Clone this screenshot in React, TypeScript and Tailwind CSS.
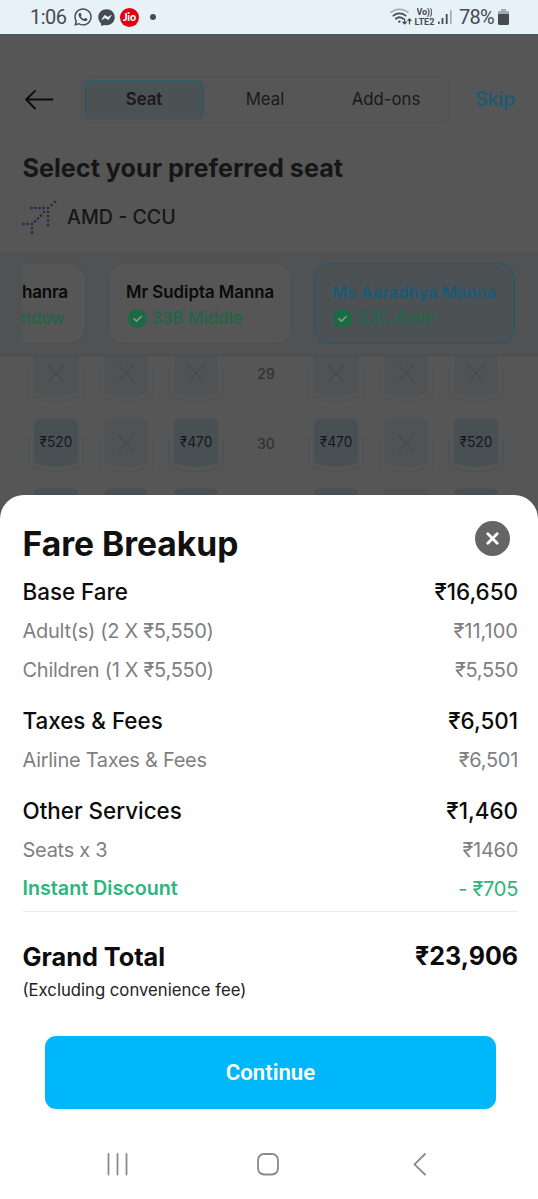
import { FaWhatsapp, FaFacebookMessenger } from "react-icons/fa";

type FareLine = {
  label: string;
  value: string;
  rowClass: string;
  labelClass: string;
  valueClass: string;
};

const HEAD = "pt-px text-[22.4px] font-medium text-[#0c0c0c]";
const SUB = "text-[20px] tracking-[-0.28px] text-[#7f7f7f]";
const SUB_VALUE = "text-[20px] tracking-[-0.3px] text-[#7f7f7f]";

const fareLines: FareLine[] = [
  { label: "Base Fare", value: "₹16,650", rowClass: "h-10", labelClass: HEAD, valueClass: HEAD },
  {
    label: "Adult(s) (2 X ₹5,550)",
    value: "₹11,100",
    rowClass: "h-[39px]",
    labelClass: SUB,
    valueClass: "text-[20px] text-[#7f7f7f]",
  },
  { label: "Children (1 X ₹5,550)", value: "₹5,550", rowClass: "h-10", labelClass: SUB, valueClass: SUB_VALUE },
  { label: "Taxes & Fees", value: "₹6,501", rowClass: "mt-2.5 h-10", labelClass: HEAD, valueClass: HEAD },
  { label: "Airline Taxes & Fees", value: "₹6,501", rowClass: "h-[39px]", labelClass: SUB, valueClass: SUB_VALUE },
  { label: "Other Services", value: "₹1,460", rowClass: "mt-[11px] h-10", labelClass: HEAD, valueClass: HEAD },
  { label: "Seats x 3", value: "₹1460", rowClass: "h-[39px]", labelClass: SUB, valueClass: SUB_VALUE },
  {
    label: "Instant Discount",
    value: "- ₹705",
    rowClass: "h-[39px]",
    labelClass: "text-[19.7px] font-semibold text-[#2cb67d]",
    valueClass: "text-[20px] tracking-[-0.3px] text-[#2cb67d]",
  },
];

// null is a blocked seat
const seatRows: { row: string; left: (string | null)[]; right: (string | null)[] }[] = [
  { row: "29", left: [null, null, null], right: [null, null, null] },
  { row: "30", left: ["₹520", null, "₹470"], right: ["₹470", null, "₹520"] },
  { row: "", left: ["", "", ""], right: ["", null, ""] },
];

function StatusBar() {
  return (
    <div className="flex h-[34px] shrink-0 items-center bg-[#e6f1f8] pl-[30px] pr-[29px] font-[Roboto] text-[#474b50]">
      <span className="w-[43px] text-[20px] leading-none tracking-[-0.5px]">1:06</span>
      <FaWhatsapp className="h-[20px] w-[20px]" />
      <FaFacebookMessenger className="ml-[5px] h-[17px] w-[17px]" />
      <span className="ml-[5px] flex h-[19px] w-[19px] items-center justify-center rounded-full bg-[#e3000f] font-[Lato] text-[10.5px] font-black leading-none text-white">
        Jio
      </span>
      <span className="ml-[11px] h-[6px] w-[6px] rounded-full bg-[#474b50]" />

      <div className="ml-auto flex items-center">
        <svg width="22" height="18" viewBox="0 0 22 18" fill="none" strokeLinecap="round">
          <path d="M1 4.4C6 .2 13 .2 18 4.4" stroke="#a3a9af" strokeWidth="1.6" />
          <path d="M3.4 7.6c3.6-2.9 8.6-2.9 12.2 0" stroke="#474b50" strokeWidth="1.8" />
          <path d="M5.9 10.7c2.1-1.7 5.1-1.7 7.2 0" stroke="#474b50" strokeWidth="1.8" />
          <circle cx="9.3" cy="13.6" r="1.2" fill="#474b50" />
          <path d="M14.6 11v4.7M13 14.2l1.6 1.7 1.6-1.7M19.5 15.8v-4.7M17.9 12.6l1.6-1.7 1.6 1.7" stroke="#474b50" strokeWidth="1.3" />
        </svg>
        <div className="ml-[2px] flex w-[21px] flex-col items-center font-bold">
          <span className="block h-[9px] overflow-hidden text-[9px] leading-[9px] tracking-[-0.3px]">Vo))</span>
          <span className="block h-[9px] text-[9.2px] leading-[9px]">LTE2</span>
        </div>
        <svg width="14" height="16" viewBox="0 0 14 16" className="ml-[3px]" fill="#474b50">
          <rect x="0" y="12.5" width="1.6" height="2.5" />
          <rect x="3.6" y="9" width="1.8" height="6" />
          <rect x="7.8" y="5" width="1.8" height="10" />
          <rect x="12" y="1" width="1.6" height="14" fill="#a3a9af" />
        </svg>
        <span className="ml-[7px] w-[39px] text-[20px] leading-none tracking-[-0.8px]">78%</span>
        <svg width="11" height="16" viewBox="0 0 11 16">
          <path d="M3 0h5v2h2a1 1 0 0 1 1 1v3H0V3a1 1 0 0 1 1-1h2z" fill="#a3a9af" />
          <path d="M0 5h11v9.5a1.500 1.500 0 0 1-1.500 1.500h-8A1.500 1.500 0 0 1 0 14.500z" fill="#474b50" />
        </svg>
      </div>
    </div>
  );
}

function PlaneDots() {
  const dots = [
    [33, 2], [29.5, 5], [26, 8],
    [9.5, 8], [13.5, 8], [17.5, 8], [21.5, 8],
    [26, 12], [26, 16], [26, 20.5], [26, 25],
    [22, 12], [19, 15.5], [16, 18.5], [13, 21.5], [10, 24],
    [1.5, 24], [5.5, 24], [10, 28], [10, 32.5],
  ];
  return (
    <svg width="35" height="35" viewBox="0 0 35 35" fill="#28264a">
      {dots.map(([x, y]) => (
        <circle key={`${x}-${y}`} cx={x} cy={y} r="1.3" />
      ))}
    </svg>
  );
}

function CheckBadge() {
  return (
    <svg width="19" height="19" viewBox="0 0 19 19" fill="none">
      <circle cx="9.5" cy="9.5" r="9.5" fill="#1a6b43" />
      <path d="M6 9.8l2.5 2.3 4.7-4.6" stroke="#8b958f" strokeWidth="1.6" strokeLinecap="round" />
    </svg>
  );
}

function Seat({ price }: { price: string | null }) {
  const blocked = price === null;
  return (
    <div className="relative flex h-[56px] w-[56px] justify-center">
      <svg width="56" height="56" viewBox="0 0 56 56" className="absolute inset-0" fill="none">
        <path
          d="M1 20v28.5l18 4.3q9 1.4 18 0L55 48.5V20"
          stroke={blocked ? "#525354" : "#4c5355"}
          strokeWidth="1.5"
        />
        <path
          d="M12 .5h32q6 0 6 6V45l-14 3.2q-8 1.3-16 0L6 45V6.5q0-6 6-6z"
          fill={blocked ? "#515254" : "#485053"}
        />
        {blocked && (
          <path d="M20 16.500l16 17.500M36 16.500l-16 17.500" stroke="#424345" strokeWidth="1" />
        )}
      </svg>
      {price && (
        <span className="relative mt-[14px] text-[13.8px] leading-[20px] text-[#14181a]">{price}</span>
      )}
    </div>
  );
}

function SeatMap() {
  return (
    <div className="h-[139px] overflow-hidden px-[21px]">
      <div className="-mt-[8px]">
        {seatRows.map((r, i) => (
          <div key={i} className="grid h-[70px] grid-cols-[repeat(7,70px)] justify-items-center">
            {r.left.map((p, j) => (
              <Seat key={j} price={p} />
            ))}
            <span className="pt-[16px] text-[14px] font-medium leading-[20px] text-[#303132]">{r.row}</span>
            {r.right.map((p, j) => (
              <Seat key={j} price={p} />
            ))}
          </div>
        ))}
      </div>
    </div>
  );
}

function Passengers() {
  return (
    <div className="flex h-[104px] gap-[22px] border-b border-[#494b4d] bg-[#505254] pl-[22px] pt-[11px]">
      <div className="flex h-[81px] w-[64px] shrink-0 flex-col rounded-r-2xl border-y border-r border-[#4c4e50] bg-[#565656] pt-[15px] text-[17px] leading-[26px]">
        <span className="font-semibold tracking-[-0.2px] text-[#0a0a0a]">hanra</span>
        <span className="-ml-px font-medium tracking-[-0.3px] text-[#1f6646]">ndow</span>
      </div>
      <div className="h-[81px] w-[184px] shrink-0 rounded-2xl border border-[#4c4e50] bg-[#565656] pl-[17px] pt-[15px] text-[17px] leading-[26px]">
        <div className="text-[16.8px] font-semibold text-[#0a0a0a]">Mr Sudipta Manna</div>
        <div className="flex items-center gap-[4.5px] pl-[2px] font-medium tracking-[-0.1px] text-[#1f6646]">
          <CheckBadge />
          <span>33B Middle</span>
        </div>
      </div>
      <div className="h-[81px] w-[201px] shrink-0 rounded-2xl border border-[#1c5a74] bg-[#4c5254] pl-[17px] pt-[15px] text-[17px] leading-[26px]">
        <div className="text-[16.6px] font-semibold text-[#175a78]">Ms Aaradhya Manna</div>
        <div className="flex items-center gap-[5px] pl-px font-medium tracking-[-0.1px] text-[#1f6646]">
          <CheckBadge />
          <span>33C Aisle</span>
        </div>
      </div>
    </div>
  );
}

export default function App() {
  return (
    <div className="flex h-[1199px] w-[538px] flex-col overflow-hidden bg-[#565656] font-[Inter,sans-serif]">
      <StatusBar />

      {/* Dimmed seat selection page */}
      <div className="flex h-[218px] shrink-0 flex-col pt-[42px]">
        <div className="flex h-[47px] items-center pl-[25px]">
          <svg width="29" height="20" viewBox="0 0 29 20" fill="none" stroke="#0b0b0b" strokeWidth="1.8" strokeLinecap="round" strokeLinejoin="round">
            <path d="M27.5 9.5H1.2M10 .9L1.2 9.5l8.8 9" />
          </svg>
          <div className="ml-[27px] flex h-[47px] w-[369px] items-center rounded-lg border border-[#4e4f50] p-[2px] text-[16.8px] text-[#191919]">
            <div className="flex h-10 w-[120px] items-center justify-center rounded-md border border-[#275b70] bg-[#4b5254] font-semibold">
              Seat
            </div>
            <div className="w-[122px] text-center">Meal</div>
            <div className="w-[120px] text-center">Add-ons</div>
          </div>
          <span className="-mt-[2px] ml-[25px] text-[20px] font-medium tracking-[-0.4px] text-[#1a5a75]">Skip</span>
        </div>
        <h1 className="mt-[28px] pl-[22.5px] text-[25.2px] font-bold leading-[35px] text-[#161616]">
          Select your preferred seat
        </h1>
        <div className="mt-[14px] flex items-center gap-[10px] pl-[22px]">
          <PlaneDots />
          <span className="text-[19.6px] font-medium text-[#161616]">AMD - CCU</span>
        </div>
      </div>
      <Passengers />
      <SeatMap />

      {/* Fare breakup sheet */}
      <div className="flex flex-1 flex-col rounded-t-[24px] bg-white pl-[22.5px] pr-[20px]">
        <div className="flex h-[76px] items-start justify-between pr-[8px] pt-[26px]">
          <h2 className="pt-[3px] text-[33.6px] font-bold leading-[40px] text-[#111]">Fare Breakup</h2>
          <button className="flex h-[35px] w-[35px] items-center justify-center rounded-full bg-[#656565]">
            <svg width="13" height="13" viewBox="0 0 13 13" stroke="white" strokeWidth="2.8" strokeLinecap="round">
              <path d="M1.8 1.8l9.4 9.4M11.2 1.8l-9.4 9.4" />
            </svg>
          </button>
        </div>

        {fareLines.map((line) => (
          <div key={line.label} className={`flex shrink-0 items-center justify-between ${line.rowClass}`}>
            <span className={line.labelClass}>{line.label}</span>
            <span className={line.valueClass}>{line.value}</span>
          </div>
        ))}

        <div className="mt-[3px] border-t border-[#ececec]" />

        <div className="mt-[25px] flex h-10 items-center justify-between font-bold text-[#0c0c0c]">
          <span className="text-[25.3px]">Grand Total</span>
          <span className="text-[25px]">₹23,906</span>
        </div>
        <p className="mt-px text-[16.7px] leading-[25px] text-[#222]">(Excluding convenience fee)</p>

        <button className="ml-[22.5px] mt-[33px] h-[73px] w-[451px] shrink-0 rounded-[11px] bg-[#00b8f9] font-[Roboto] text-[22.2px] font-semibold text-white">
          Continue
        </button>

        <div className="mt-[44px] flex pl-[84.5px]">
          <svg width="320" height="24" viewBox="0 0 320 24" fill="none" stroke="#8a8a8a" strokeWidth="1.8" strokeLinecap="round" strokeLinejoin="round">
            <path d="M1.5 1v20.5M10.5 1v20.5M19.5 1v20.5" />
            <rect x="151" y="1" width="20" height="20.5" rx="6" />
            <path d="M318 1L307.5 11.3 318 21.500" />
          </svg>
        </div>
      </div>
    </div>
  );
}
